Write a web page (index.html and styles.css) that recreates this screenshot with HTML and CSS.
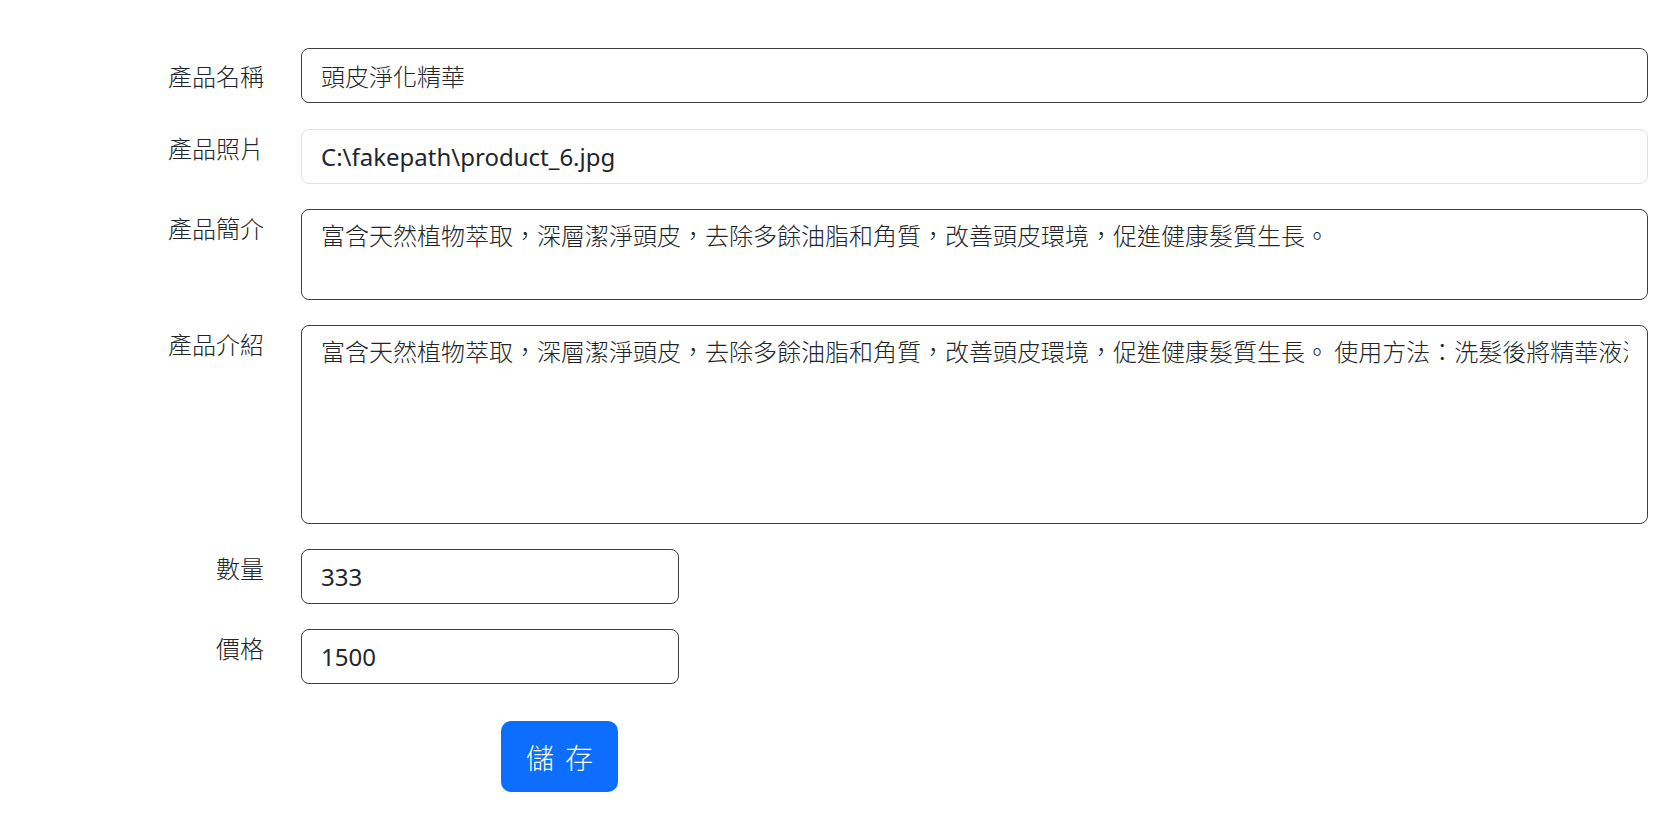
FILE: index.html
```html
<!DOCTYPE html>
<html lang="zh-Hant">
<head>
<meta charset="utf-8">
<title>編輯產品</title>
<link rel="stylesheet" href="styles.css">
</head>
<body>
<form class="product-form">
  <div class="form-row form-row-first">
    <label class="form-label form-label-first">產品名稱</label>
    <div class="form-field">
      <div class="control control-dark control-cjk">頭皮淨化精華</div>
    </div>
  </div>
  <div class="form-row">
    <label class="form-label">產品照片</label>
    <div class="form-field">
      <div class="control control-light">C:\fakepath\product_6.jpg</div>
    </div>
  </div>
  <div class="form-row">
    <label class="form-label">產品簡介</label>
    <div class="form-field">
      <div class="area area-short"><div class="area-text">富含天然植物萃取，深層潔淨頭皮，去除多餘油脂和角質，改善頭皮環境，促進健康髮質生長。</div></div>
    </div>
  </div>
  <div class="form-row">
    <label class="form-label">產品介紹</label>
    <div class="form-field">
      <div class="area area-tall"><div class="area-text">富含天然植物萃取，深層潔淨頭皮，去除多餘油脂和角質，改善頭皮環境，促進健康髮質生長。 使用方法：洗髮後將精華液滴</div></div>
    </div>
  </div>
  <div class="form-row">
    <label class="form-label">數量</label>
    <div class="form-field">
      <div class="control control-dark control-short">333</div>
    </div>
  </div>
  <div class="form-row">
    <label class="form-label">價格</label>
    <div class="form-field">
      <div class="control control-dark control-short">1500</div>
    </div>
  </div>
  <div class="form-actions">
    <button type="button" class="btn-save">儲 存</button>
  </div>
</form>
</body>
</html>
```

FILE: styles.css
```css
html, body {
  margin: 0;
  padding: 0;
  background: #ffffff;
}

body {
  font-family: "Noto Sans", "Noto Sans CJK TC", sans-serif;
  color: #212529;
}

.product-form {
  padding-top: 48px;
  width: 1648px;
}

.form-row {
  display: flex;
  column-gap: 37px;
  margin-bottom: 25px;
}

.form-row-first {
  margin-bottom: 26px;
}

.form-label {
  width: 264px;
  flex: none;
  text-align: right;
  font-family: "Noto Sans CJK TC", sans-serif;
  font-weight: 300;
  font-size: 24px;
  line-height: 34px;
  padding-top: 2px;
  box-sizing: border-box;
}

.form-label-first {
  padding-top: 11px;
}

.form-field {
  flex: 1;
  min-width: 0;
}

.control {
  box-sizing: border-box;
  height: 55px;
  display: flex;
  align-items: center;
  padding: 0 19px;
  border-radius: 8px;
  font-size: 24px;
  font-weight: 400;
  white-space: nowrap;
  overflow: hidden;
}

.control-cjk {
  font-family: "Noto Sans CJK TC", sans-serif;
  font-weight: 300;
}

.control-dark {
  border: 1px solid #3b3f44;
}

.control-light {
  border: 1px solid #dee2e6;
}

.control-short {
  width: 378px;
}

.area {
  box-sizing: border-box;
  border: 1px solid #3b3f44;
  border-radius: 8px;
  padding: 8px 19px;
  font-size: 24px;
  line-height: 34px;
}

.area-short {
  height: 91px;
}

.area-tall {
  height: 199px;
}

.area-text {
  white-space: nowrap;
  overflow: hidden;
  font-family: "Noto Sans CJK TC", sans-serif;
  font-weight: 300;
}

.form-actions {
  padding-left: 501px;
  padding-top: 12px;
}

.btn-save {
  width: 117px;
  height: 71px;
  border: none;
  border-radius: 10px;
  background: #0d6efd;
  color: #ffffff;
  font-family: "Noto Sans CJK TC", sans-serif;
  font-weight: 300;
  font-size: 28px;
  word-spacing: 5px;
  padding: 0;
  cursor: pointer;
}
```
